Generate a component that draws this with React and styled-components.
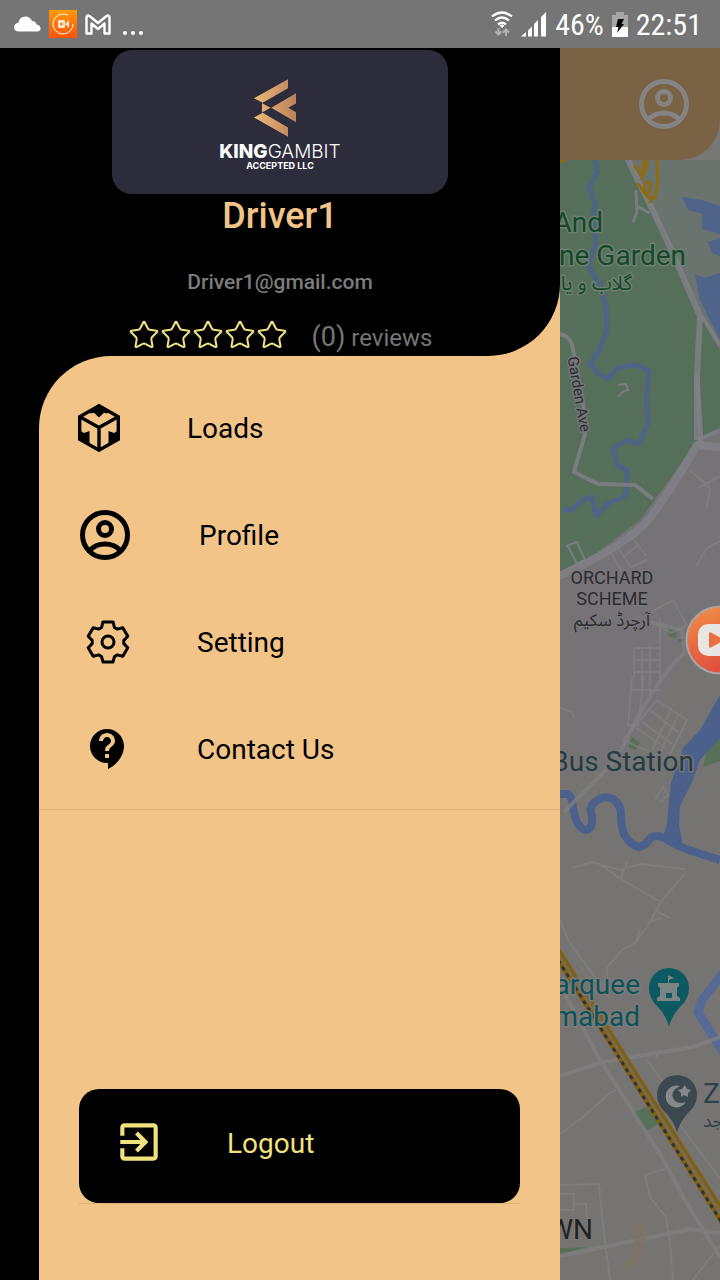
import React from "react";
import styled, { createGlobalStyle } from "styled-components";
import { MdContactSupport, MdExitToApp } from "react-icons/md";
import { Star } from "lucide-react";

const sand = "#f2c488";
const lemon = "#f2e27d";

const GlobalStyle = createGlobalStyle`
  * { box-sizing: border-box; }
  body { margin: 0; background: #000; font-family: Roboto, "Noto Sans", sans-serif; }
  button { font: inherit; border: 0; background: none; padding: 0; cursor: pointer; }
`;

const Page = styled.div`
  display: flex;
  flex-direction: column;
  min-height: 100vh;
`;

const StatusBar = styled.header`
  display: flex;
  justify-content: space-between;
  align-items: center;
  height: 48px;
  padding: 0 18px 0 14px;
  background: #757575;
  color: #fff;
`;

const StatusGroup = styled.div`
  display: flex;
  align-items: center;
  gap: 8px;
`;

const StatusText = styled.span`
  padding-top: 2px;
  font-family: "Roboto Condensed", "Liberation Sans Narrow", Roboto, sans-serif;
  font-size: 30px;
  line-height: 46px;
`;

const Screen = styled.div`
  position: relative;
  flex: 1;
  display: grid;
  grid-template-columns: 7fr 2fr;
  overflow: hidden;
`;

const Drawer = styled.nav`
  display: flex;
  flex-direction: column;
  background: #000;
`;

const HeadBackdrop = styled.div`
  background: ${sand};
`;

const Head = styled.div`
  display: flex;
  flex-direction: column;
  align-items: center;
  padding-top: 2px;
  background: #000;
  border-radius: 0 0 72px 0;
`;

const LogoCard = styled.div`
  display: flex;
  flex-direction: column;
  align-items: center;
  width: 60%;
  height: 144px;
  padding-top: 29px;
  border-radius: 20px;
  background: #2d2c3c;
  color: #fff;
`;

const LogoSymbol = styled.div`
  height: 58px;
  padding-right: 10px;
`;

const LogoName = styled.div`
  margin-top: 5px;
  font-family: Inter, sans-serif;
  font-size: 19px;
  line-height: 20px;
  font-weight: 300;
  b { font-weight: 800; }
`;

const LogoTag = styled.div`
  font-family: Inter, sans-serif;
  font-size: 9px;
  line-height: 8px;
  font-weight: 700;
`;

const DriverName = styled.h1`
  margin: 0;
  font-size: 36px;
  line-height: 44px;
  font-weight: 500;
  color: ${sand};
`;

const Email = styled.p`
  margin: 32px 0 24px;
  font-size: 21px;
  line-height: 24px;
  font-weight: 500;
  color: #7c7c7c;
`;

const Rating = styled.div`
  display: flex;
  align-items: center;
  gap: 24px;
  height: 38px;
  color: #757575;
`;

const Stars = styled.div`
  display: flex;
  padding-bottom: 4px;
  color: ${lemon};
`;

const Reviews = styled.div`
  font-size: 24px;
  line-height: 36px;
`;

const Count = styled.span`
  font-size: 27px;
`;

const Panel = styled.div`
  flex: 1;
  display: flex;
  flex-direction: column;
  margin-left: 39px;
  padding-top: 18px;
  border-radius: 72px 0 0 0;
  background: ${sand};
`;

const MenuList = styled.ul`
  list-style: none;
  margin: 0;
  padding: 0 0 7px;
  border-bottom: 1px solid #dcb078;
`;

const MenuButton = styled.button`
  display: flex;
  align-items: center;
  gap: ${(p) => p.$gap}px;
  width: 100%;
  height: 107px;
  padding-left: 36px;
  font-size: 28px;
  color: #000;
`;

const ButtonLabel = styled.span`
  padding-top: 2px;
`;

const IconSlot = styled.span`
  display: flex;
  justify-content: center;
  width: ${(p) => p.$width}px;
`;

const LogoutArea = styled.div`
  margin: auto 40px 76px;
  border-bottom: 1px solid #dcb078;
`;

const LogoutButton = styled.button`
  display: flex;
  align-items: center;
  gap: 63px;
  width: 100%;
  height: 114px;
  padding: 0 0 8px 35px;
  border-radius: 20px;
  background: #000;
  color: ${lemon};
  font-size: 28px;
`;

const MapColumn = styled.main`
  display: flex;
  flex-direction: column;
  min-width: 0;
  background: #777776;
`;

const AppBar = styled.div`
  display: flex;
  justify-content: flex-end;
  height: 112px;
  padding: 26px 26px 0 0;
  border-radius: 0 0 40px 0;
  background: #7a6244;
  color: #858384;
`;

const AccountButton = styled.button`
  height: 60px;
  color: inherit;
`;

const MapFrame = styled.div`
  flex: 1;
  position: relative;
  overflow: hidden;
`;

const MapSvg = styled.svg`
  position: absolute;
  inset: 0;
  width: 100%;
  height: 100%;
  font-family: Roboto, sans-serif;
  .label { paint-order: stroke; stroke-width: 3px; stroke-linejoin: round; }
  .urdu { direction: rtl; font-family: "Noto Sans Arabic", "DejaVu Sans", sans-serif; }
`;

const RecorderBubble = styled.button`
  position: absolute;
  right: -35px;
  top: 557px;
  width: 70px;
  height: 70px;
`;

const CubeIcon = () => (
  <svg width="48" height="48" viewBox="0 0 48 48" fill="none" stroke="currentColor" strokeWidth="3.400">
    <path d="M24 1.800 43.300 12.800v22.400L24 46.200 4.700 35.200V12.800Z" />
    <path d="M4.700 12.800 24 23.500 43.300 12.800M24 23.500v22" />
    <path fill="currentColor" stroke="none" d="M24 0 13 7 16 9.500 19 8.800 24 13.500 29 8.800 32 9.500 35 7Z" />
    <path fill="currentColor" stroke="none" d="M4 26 9 29 14.500 27V40L4 35ZM44 26 39 29 33.500 27V40L44 35Z" />
  </svg>
);

const AccountIcon = () => (
  <svg width="60" height="60" viewBox="0 0 60 60" fill="none" stroke="currentColor" strokeWidth="5">
    <circle cx="30" cy="30" r="22.500" />
    <circle cx="30" cy="24" r="6.500" />
    <path d="M15 45q6-6 15-6t15 6" />
  </svg>
);

const GearIcon = () => (
  <svg width="48" height="48" viewBox="-24 -24 48 48" fill="none" stroke="currentColor" strokeWidth="3" strokeLinejoin="round">
    <path d="M-5-20H5L6.500-14.500 9.300-12.900 14.800-14.300 19.800-5.700 15.800-1.600V1.600L19.800 5.700 14.800 14.300 9.300 12.900 6.500 14.500 5 20H-5L-6.500 14.500-9.300 12.900-14.800 14.300-19.800 5.700-15.800 1.600V-1.600L-19.800-5.700-14.800-14.300-9.300-12.900-6.500-14.500Z" />
    <circle r="6" />
  </svg>
);

const LogoMark = () => (
  <svg width="42" height="58" viewBox="462 95 126 173">
    <defs>
      <linearGradient id="gold" x1="0" y1="0" x2="1" y2="0">
        <stop offset="0" stopColor="#edba78" />
        <stop offset="1" stopColor="#b9825a" />
      </linearGradient>
    </defs>
    <path
      fill="url(#gold)"
      d="M462 152 564 95V122L488 166ZM462 210 488 196 564 240V268ZM486 167 512 181 486 195ZM514 181 588 137V168L565 181 588 194V224Z"
    />
  </svg>
);

const CloudIcon = () => (
  <svg width="27" height="16" viewBox="0 0 27 16" fill="#fff">
    <path d="M4.500 15.500Q0 15 0 11.500q0-4 4.500-5Q5.500.500 11.500.500q4.500 0 6.500 4.500 4 0 4.500 3.500 4 .500 4 4 0 2.500-3 3Z" />
  </svg>
);

const RecorderBadge = () => (
  <svg width="28" height="28" viewBox="0 0 28 28">
    <defs>
      <linearGradient id="badge" x1="0" y1="0" x2="0" y2="1">
        <stop offset="0" stopColor="#ff9a08" />
        <stop offset="1" stopColor="#ff5209" />
      </linearGradient>
    </defs>
    <path fill="url(#badge)" d="M0 0h28v28H0z" />
    <circle cx="14" cy="14" r="10" fill="none" stroke="#fff" strokeWidth="1" strokeDasharray="52 11" />
    <rect x="9" y="10" width="7" height="8" rx="1" fill="#ffe6d2" />
    <path fill="#ff7008" d="m11.500 12 3 2-3 2z" />
    <path fill="#ffe6d2" d="m16 14 4-4v8z" />
  </svg>
);

const MailIcon = () => (
  <svg width="26" height="21" viewBox="0 0 26 21" fill="none" stroke="#fff" strokeWidth="2.400" strokeLinejoin="round">
    <path d="M1.500 19.500V3.500q.500-3 3-1.500l8.500 7 8.500-7q2.500-1.500 3 1.500v16h-5V9.500L13 15l-6.500-5.500v10Z" />
  </svg>
);

const DotsIcon = () => (
  <svg width="24" height="24" viewBox="-4 0 24 24" fill="#fff">
    <circle cx="2" cy="21" r="2" />
    <circle cx="10" cy="21" r="2" />
    <circle cx="18" cy="21" r="2" />
  </svg>
);

const WifiIcon = () => (
  <svg width="22" height="26" viewBox="0 0 22 26" fill="none" stroke="#fff" strokeWidth="2.200">
    <path d="M1 5.500q10-8 20 0M4 9.500q7-6 14 0M7 13.500q4-3.500 8 0" />
    <path fill="#fff" stroke="none" d="m8.500 14.500 2.500 2.500 2.500-2.500q-2.500-2-5 0z" />
    <path stroke="#b3b3b3" strokeWidth="2" d="M7.500 17v6M4.500 20.500l3 3 3-3M15 25v-6M12 21.500l3-3 3 3" />
  </svg>
);

const SignalIcon = () => (
  <svg width="26" height="26" viewBox="0 0 26 26" fill="#fff">
    <path d="M0 25.500 5 21v4.500ZM7 19.500l4-4v10H7ZM13 13l4-4v16.500h-4ZM20 6l5-5v24.500h-5Z" />
  </svg>
);

const BatteryIcon = () => (
  <svg width="16" height="25" viewBox="0 0 16 25">
    <path fill="#a6a6a6" d="M0 3h4V0h8v3h4v12H0z" />
    <path fill="#fff" d="M0 15h16v10H0z" />
    <path fill="#000" d="M6 7h6l-2.500 5H12L5 21l1.500-6H4z" />
  </svg>
);

const CityMap = () => (
  <MapSvg viewBox="560 160 160 1120" preserveAspectRatio="xMinYMin slice" role="img" aria-label="Map">
    <rect x="560" y="160" width="600" height="1400" fill="#757376" />
    <path fill="#767472" d="M560 780 610 765 660 710 685 650 720 640V1280H560Z" />
    <path fill="#69746f" d="M626 160h94v200l-30-60Z" />
    <path fill="#566f5a" d="M560 160h68l30 62 42 90 20 38v82l-23 9-25 35-32 44-42 32-38 20Z" />
    <path fill="#56705a" d="M720 735v26l-17 6 4-18zM669 629l8 1-1 8-8-2zM678 639h10v3h-10zM632 737l8 6-5 7-7-3zM635 1112l12-5 11 17-12 7zM560 1248l28-1-28 7z" />
    <path fill="#4f638b" d="m682 197 20 3 18 6v28l-18-5v-15l-14-4ZM720 238l-12 4 4 11 8 3ZM695 274l9 4 16-5v67l-20-40Z" />

    <g fill="none" stroke="#4f6484" strokeWidth="5" strokeLinejoin="round">
      <path d="M595 160l2 12-8 16 6 15-2 15 3 25-8 22 12 20 6 22 1 23-7 19-10 15 9 10 9 5 9-11 19-3 13 6-3 28 2 24-9 21-12-4-14 9 4 16 10 5-1 26-19 8-11 12-4-19-9 3-12 10h-8" />
      <path strokeWidth="8" stroke="#4b618c" d="M560 794h8q4 2 5 14 4 22 14 22 6-2 5-14-4-8 3-14 8-7 18-3 8 6 8 14 0 14 3 21 6 11 15 13 8-2 11-9 6-4 14 0 12 8 31 14l25 8" />
      <path strokeWidth="9" stroke="#566a93" d="m724 972-22 28-4 12 11 18 15 23" />
    </g>
    <path fill="#4b618c" d="m720 695-20 35-17 18-12 35-4 40-4 15 20 8-4-22 1-18 12-24 8-22 20-22Z" />

    <g fill="none" stroke="#83818a" strokeOpacity=".8" strokeLinejoin="round">
      <path strokeWidth="6" d="m627 158 28 57 14 30 31 71-3 60v64" />
      <path strokeWidth="3" d="m636 190 1 22-4 10M637 206l12 7" />
      <path strokeWidth="2" d="M618 385l8-1 2 6-6 2-4 5M566 546l11-4 8 18-8 4-9-18" />
      <path strokeWidth="4" d="M560 334q11 2 13 15l11 60 1 25-11 38 24 12 37 1 18 14M697 440l23-10M702 316l18 30" />
      <path strokeWidth="8" d="M556 577q70-30 95-60 25-35 46-72l23 2" />
      <path strokeWidth="5" d="m697 375 4 68" />
    </g>
    <g fill="none" stroke="#828081" strokeOpacity=".7" strokeWidth="2">
      <path d="m608 548 22 38M615 543l16 24 16-7M628 532l18 24M625 556l14-12M690 470l20 18-3 20M698 488l22-12M722 540l-15 8-11 18M651 612l22-12 14 25-16 8-20-12M634 648h26M634 660h26M634 672h26M631 690h30M634 648v30M642 650v50M650 645v50M660 618v65M632 677l-4 48 10 1 6-50" />
      <path strokeWidth="4" d="m650 622 32 8 3 22q-27 25-55 80l-14 28-52 52" />
      <path d="m657 700 30 20-20 40-44-20 34-40M650 710l28 22M642 722l30 22M671 709l-18 40M679 714l-20 40M636 728l30 20M560 708l12 4 2 5" />
      <path d="m572 868 20-6 28 8 20-6 45 5M600 864l22 16 37 21M627 862l-6 16M685 874l-24 27-10 20-16 22-12 6-16 18v24M657 912l14 6M648 922l14-4M640 930l-5 14M560 920l8 20 42 58M655 800l8-13 5 8-9 8" />
      <path strokeWidth="4" d="m560 985 40 75 60 94 26 48 34 55M560 1076l43-14 90-15 27-10M560 1256l130-27 30 4" />
      <path d="m647 1060 18 25M680 1125l41 55M560 1134l22-16 28-25 7-4M645 1175l20-6M645 1175l5 22 16 20 4 25 3 38M560 1185l39-1 5 50 6 46M560 1194h14v16h-14M574 1204h12l2 32M720 1245l-28 36M660 1050l-4 8" />
    </g>
    <g fill="none">
      <path stroke="#776b50" strokeWidth="9" d="m558 957 66 103 98 156" />
      <path stroke="#80600f" strokeWidth="3" d="m558 948 70 112 94 149" />
      <path stroke="#80600f" strokeWidth="4" d="m558 960 62 99 102 164" />
      <path stroke="#35332c" strokeWidth="3" strokeDasharray="4 4" d="m558 960 62 99 102 164" />
      <path stroke="#916b11" strokeWidth="3" d="m634 165 8 11 2-16M641 180l7-19M657 160l1 20-3 18h-6l-12-15M645 184q3-5 6 1l-3 9q-6-2-3-10M652 198l-2 5M558 162l8-2" />
    </g>
    <path fill="#7d7464" fillOpacity=".7" d="m630 1225 8-3 9 6-3 20-6 18-14 4v-8l8-8 2-16z" />

    <g className="label" fontSize="28" textAnchor="end" stroke="#6f7e72">
      <text x="603" y="232" fill="#14492a">And</text>
      <text x="686" y="265" fill="#14492a">ne Garden</text>
      <text x="694" y="771" fill="#263a42" stroke="#777676">Bus Station</text>
      <text x="640" y="994" fill="#0b5259" stroke="#7c7a79">arquee</text>
      <text x="640" y="1026" fill="#0b5259" stroke="#7c7a79">mabad</text>
      <text x="593" y="1239" fill="#222" stroke="#777574">WN</text>
    </g>
    <text className="label" x="703" y="1103" fontSize="28" fill="#2e4049" stroke="#777574">Z</text>
    <g className="label" fontSize="18" textAnchor="middle" fill="#2c2b2e" stroke="#777579">
      <text x="612" y="584">ORCHARD</text>
      <text x="612" y="605">SCHEME</text>
      <text transform="translate(574 395) rotate(80)" fontSize="15" stroke="#74777a">Garden Ave</text>
    </g>
    <g className="label urdu">
      <text x="632" y="290" fontSize="20" fill="#14492a" stroke="#6f7e72">گلاب و یا</text>
      <text x="612" y="626" fontSize="17" textAnchor="middle" fill="#2c2b2e" stroke="#777579">آرچرڈ سکیم</text>
      <text x="703" y="1127" fontSize="18" textAnchor="end" fill="#2e4049" stroke="#777574">مسجد</text>
    </g>

    <path fill="#0c5a61" d="M669 1027q-2-10-11-20-9-8-9-19a20 20 0 0 1 40 0q0 11-9 19-9 10-11 20Z" />
    <path fill="#7b8583" fillRule="evenodd" d="M657 1001v-3l3-2v-8l-2-2v-3h10v-8l6 3-5 2v3h10v3l-2 2v8l3 2v3ZM666 998h6v-5h-6Z" />
    <path fill="#3b484f" d="M677 1133q-2-10-11-20-9-8-9-18a20 20 0 0 1 40 0q0 10-9 18-9 10-11 20Z" />
    <path fill="#868a8c" d="M680 1086a11 11 0 1 0 6 16q-10 3-13-4t7-12ZM685 1085l2 4 4 1-3 3v4l-4-2-3 2v-4l-3-3 4-1Z" />
  </MapSvg>
);

const BubbleIcon = () => (
  <svg width="70" height="70" viewBox="0 0 70 70">
    <defs>
      <linearGradient id="bubble" x1="0" y1="0" x2="0.3" y2="1">
        <stop offset="0" stopColor="#f09047" />
        <stop offset="1" stopColor="#e14f3f" />
      </linearGradient>
    </defs>
    <circle cx="35" cy="35" r="33.500" fill="url(#bubble)" stroke="#a9a6a8" strokeWidth="2" />
    <rect x="13" y="19" width="34" height="32" rx="10" fill="#e8e5e3" />
    <path fill="#e8703f" d="M24 29q0-3 3-1l9 5q2 2 0 4l-9 5q-3 2-3-1Z" />
  </svg>
);

const menu = [
  { label: "Loads", icon: <CubeIcon />, slot: 48, gap: 64 },
  { label: "Profile", icon: <AccountIcon />, slot: 60, gap: 64 },
  { label: "Setting", icon: <GearIcon />, slot: 66, gap: 56 },
  { label: "Contact Us", icon: <MdContactSupport size={48} />, slot: 66, gap: 56 },
];

export default function App() {
  return (
    <Page>
      <GlobalStyle />
      <StatusBar>
        <StatusGroup>
          <CloudIcon />
          <RecorderBadge />
          <MailIcon />
          <DotsIcon />
        </StatusGroup>
        <StatusGroup>
          <WifiIcon />
          <SignalIcon />
          <StatusText>46%</StatusText>
          <BatteryIcon />
          <StatusText>22:51</StatusText>
        </StatusGroup>
      </StatusBar>
      <Screen>
        <Drawer aria-label="Main menu">
          <HeadBackdrop>
            <Head>
              <LogoCard>
                <LogoSymbol>
                  <LogoMark />
                </LogoSymbol>
                <LogoName>
                  <b>KING</b>GAMBIT
                </LogoName>
                <LogoTag>ACCEPTED LLC</LogoTag>
              </LogoCard>
              <DriverName>Driver1</DriverName>
              <Email>Driver1@gmail.com</Email>
              <Rating>
                <Stars>
                  {[1, 2, 3, 4, 5].map((n) => (
                    <Star key={n} size={32} strokeWidth={1.5} />
                  ))}
                </Stars>
                <Reviews>
                  <Count>(0)</Count> reviews
                </Reviews>
              </Rating>
            </Head>
          </HeadBackdrop>
          <Panel>
            <MenuList>
              {menu.map((item) => (
                <li key={item.label}>
                  <MenuButton type="button" $gap={item.gap}>
                    <IconSlot $width={item.slot}>{item.icon}</IconSlot>
                    <ButtonLabel>{item.label}</ButtonLabel>
                  </MenuButton>
                </li>
              ))}
            </MenuList>
            <LogoutArea>
              <LogoutButton type="button">
                <MdExitToApp size={50} />
                <ButtonLabel>Logout</ButtonLabel>
              </LogoutButton>
            </LogoutArea>
          </Panel>
        </Drawer>
        <MapColumn>
          <AppBar>
            <AccountButton type="button" aria-label="Account">
              <AccountIcon />
            </AccountButton>
          </AppBar>
          <MapFrame>
            <CityMap />
          </MapFrame>
        </MapColumn>
        <RecorderBubble type="button" aria-label="Screen recorder">
          <BubbleIcon />
        </RecorderBubble>
      </Screen>
    </Page>
  );
}
